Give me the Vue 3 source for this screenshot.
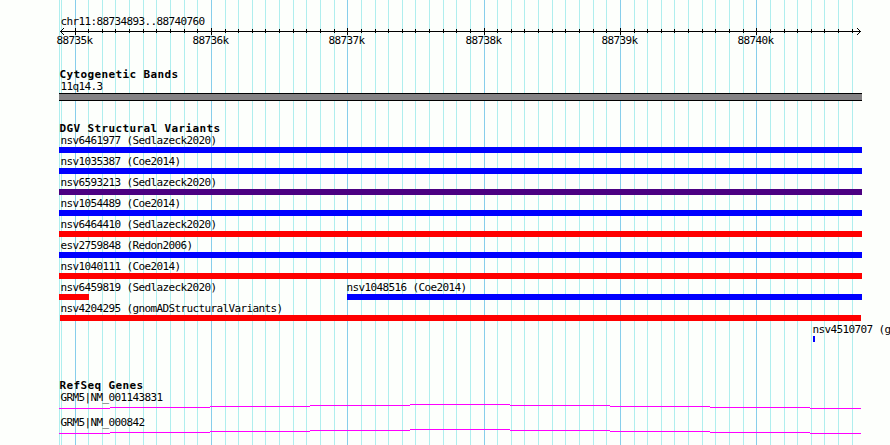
<template>
  <div class="browser">
    <svg class="grid" width="890" height="445" shape-rendering="crispEdges">
      <rect x="59" y="0" width="1" height="445" fill="#afeeee" />
      <rect
        v-for="t in ticks"
        :key="t.x"
        :x="t.x"
        y="0"
        width="1"
        height="445"
        :fill="t.major ? '#87ceeb' : '#afeeee'"
      />
    </svg>

    <section class="ruler">
      <div class="label inset">chr11:88734893..88740760</div>
      <svg class="axis" width="803" height="7" viewBox="59 28 803 7" shape-rendering="crispEdges">
        <rect x="60" y="31" width="801" height="1" />
        <rect
          v-for="t in axisTicks"
          :key="t.x"
          :x="t.x"
          :y="t.major ? 28 : 29"
          width="1"
          :height="t.major ? 7 : 4"
        />
        <path d="M61 30h1v-1h1v-1h1v1h-1v1h-1v1h-1zM61 32h1v1h1v1h1v1h-1v-1h-1v-1h-1z" />
        <path d="M860 30h-1v-1h-1v-1h-1v1h1v1h1v1h1zM860 32h-1v1h-1v1h-1v1h1v-1h1v-1h1z" />
      </svg>
      <div class="scale">
        <span
          v-for="t in majorTicks"
          :key="t.x"
          class="scale-label"
          :style="{ left: t.x - 77.6 + 'px' }"
        >{{ t.text }}</span>
      </div>
    </section>

    <section class="track bands">
      <h3>Cytogenetic Bands</h3>
      <div class="label inset">11q14.3</div>
      <div class="band"></div>
    </section>

    <section class="track variants">
      <h3>DGV Structural Variants</h3>
      <div v-for="(row, i) in rows" :key="i" class="row">
        <div
          v-for="f in row"
          :key="f.name"
          class="feature"
          :style="{ marginLeft: f.gap + 'px', width: f.width + 'px' }"
        >
          <div class="label" :style="{ marginLeft: f.shift + 0.4 + 'px' }">{{ f.name }}</div>
          <div :class="['bar', f.kind]"></div>
        </div>
      </div>
    </section>

    <section class="track genes">
      <h3>RefSeq Genes</h3>
      <div v-for="g in genes" :key="g" class="gene">
        <div class="label inset">{{ g }}</div>
        <svg class="intron" width="803" height="5" viewBox="59 0 803 5" shape-rendering="crispEdges">
          <rect v-for="s in steps" :key="s.x" :x="s.x" :y="s.y" :width="s.w" height="1" fill="#f0f" />
        </svg>
      </div>
    </section>
  </div>
</template>

<script setup>
// 100 bp per tick, every tenth one is a kilobase
const ticks = []
for (let i = -1; i <= 57; i++) {
  ticks.push({
    x: Math.floor(75.04 + i * 13.635),
    major: i % 10 === 0,
    text: `${88735 + i / 10}k`,
  })
}
const axisTicks = ticks.slice(1)
const majorTicks = ticks.filter(t => t.major)

const rows = [
  [{ name: 'nsv6461977 (Sedlazeck2020)', gap: 0, width: 803, shift: 1, kind: 'gain' }],
  [{ name: 'nsv1035387 (Coe2014)', gap: 0, width: 803, shift: 1, kind: 'gain' }],
  [{ name: 'nsv6593213 (Sedlazeck2020)', gap: 0, width: 803, shift: 1, kind: 'inversion' }],
  [{ name: 'nsv1054489 (Coe2014)', gap: 0, width: 803, shift: 1, kind: 'gain' }],
  [{ name: 'nsv6464410 (Sedlazeck2020)', gap: 0, width: 803, shift: 1, kind: 'loss' }],
  [{ name: 'esv2759848 (Redon2006)', gap: 0, width: 803, shift: 1, kind: 'gain' }],
  [{ name: 'nsv1040111 (Coe2014)', gap: 0, width: 803, shift: 1, kind: 'loss' }],
  [
    { name: 'nsv6459819 (Sedlazeck2020)', gap: 0, width: 30, shift: 1, kind: 'loss' },
    { name: 'nsv1048516 (Coe2014)', gap: 258, width: 515, shift: -1, kind: 'gain' },
  ],
  [{ name: 'nsv4204295 (gnomADStructuralVariants)', gap: 1, width: 801, shift: 0, kind: 'loss' }],
  [{ name: 'nsv4510707 (g', gap: 754, width: 2, shift: -1, kind: 'gain' }],
]

const genes = ['GRM5|NM_001143831', 'GRM5|NM_000842']

// the intron line rises one pixel per segment up to the middle
const edges = [59, 110, 210, 310, 410, 510, 610, 710, 810, 861]
const steps = [4, 3, 2, 1, 0, 1, 2, 3, 4].map((y, i) => ({
  x: edges[i],
  y,
  w: edges[i + 1] - edges[i],
}))
</script>

<style>
body { margin: 0; background: #fdfffc; }
</style>

<style scoped>
.browser {
  position: relative; box-sizing: border-box;
  width: 890px; height: 445px; padding: 15px 0 0 59px;
  overflow: hidden; background: #fdfffc; color: #000;
  font-family: "DejaVu Sans Mono", "Liberation Mono", monospace;
  font-size: 11px;
}
.grid { position: absolute; left: 0; top: 0; }
.ruler, .track { position: relative; }
.label {
  height: 13px; line-height: 13px;
  letter-spacing: -0.622px; white-space: pre;
}
.inset { padding-left: 1.4px; }
h3 {
  margin: 0; height: 11px; line-height: 11px; padding-left: 0.4px;
  font-size: 11px; font-weight: 700; letter-spacing: 0.378px; white-space: pre;
}
.ruler { height: 54px; }
.axis { display: block; }
.scale { position: relative; height: 13px; margin-top: -1px; }
.scale-label {
  position: absolute; top: 0; line-height: 13px;
  letter-spacing: -0.622px;
}
.band {
  box-sizing: border-box; width: 803px; height: 8px;
  border: solid #000; border-width: 1px 0; background: #848284;
}
.variants { margin-top: 21px; }
.bands { height: 32px; }
.variants { margin-top: 22px; }
.row { display: flex; height: 19px; margin-bottom: 2px; }
.feature { flex: none; }
.bar { height: 6px; }
.gain { background: #00f; }
.loss { background: #f00; }
.inversion { background: #4b0082; }
.genes { margin-top: 38px; }
.gene { height: 25px; }
.intron { display: block; }
</style>
